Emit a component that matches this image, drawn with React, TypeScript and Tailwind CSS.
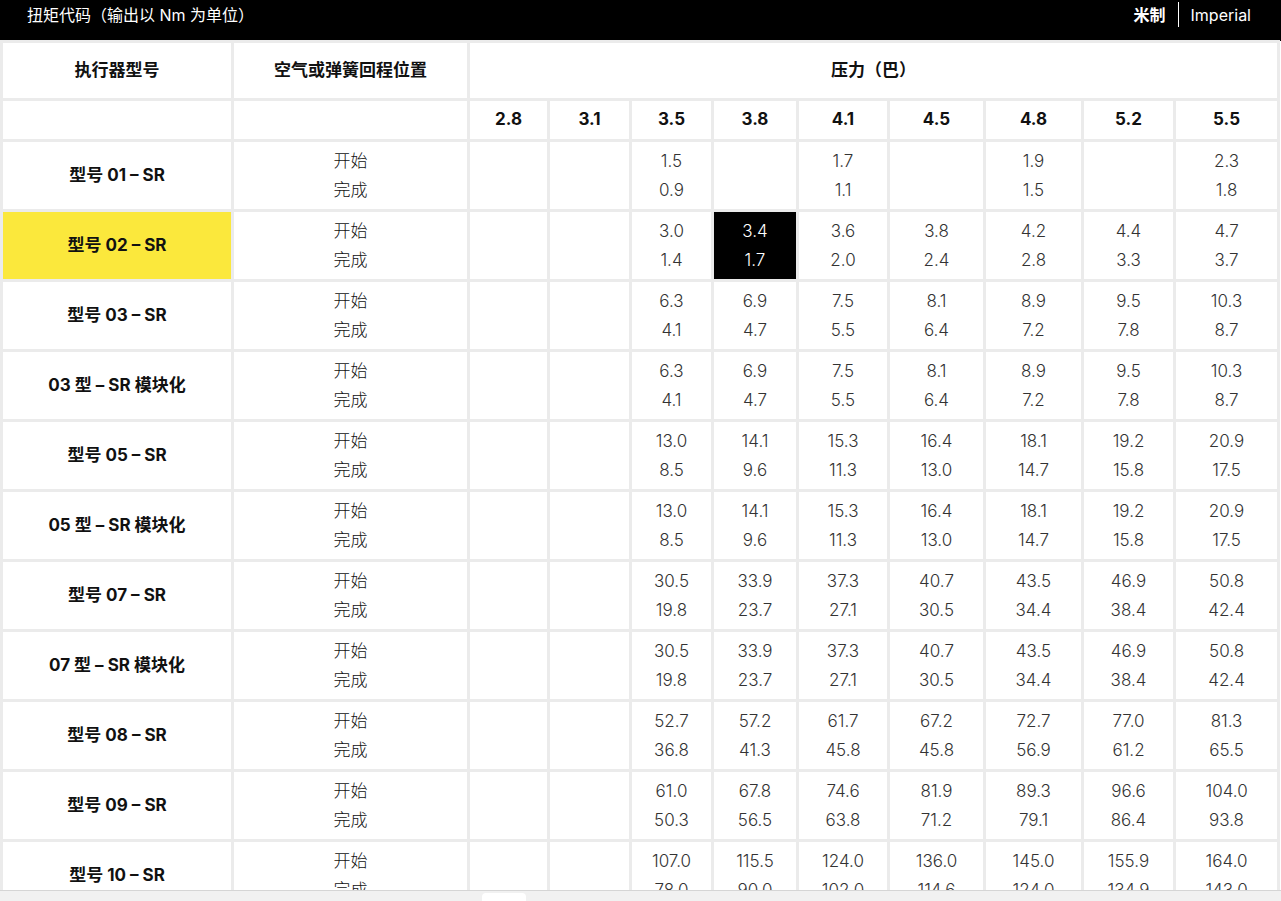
const cols = ["2.8", "3.1", "3.5", "3.8", "4.1", "4.5", "4.8", "5.2", "5.5"];
const widths = [231, 236, 80, 82, 82, 85, 91, 96, 98, 92, 104];

type Row = { name: string; vals: (string[] | null)[]; hl?: boolean };

const rows: Row[] = [
  { name: "型号 01 – SR", vals: [null, null, ["1.5", "0.9"], null, ["1.7", "1.1"], null, ["1.9", "1.5"], null, ["2.3", "1.8"]] },
  { name: "型号 02 – SR", hl: true, vals: [null, null, ["3.0", "1.4"], ["3.4", "1.7"], ["3.6", "2.0"], ["3.8", "2.4"], ["4.2", "2.8"], ["4.4", "3.3"], ["4.7", "3.7"]] },
  { name: "型号 03 – SR", vals: [null, null, ["6.3", "4.1"], ["6.9", "4.7"], ["7.5", "5.5"], ["8.1", "6.4"], ["8.9", "7.2"], ["9.5", "7.8"], ["10.3", "8.7"]] },
  { name: "03 型 – SR 模块化", vals: [null, null, ["6.3", "4.1"], ["6.9", "4.7"], ["7.5", "5.5"], ["8.1", "6.4"], ["8.9", "7.2"], ["9.5", "7.8"], ["10.3", "8.7"]] },
  { name: "型号 05 – SR", vals: [null, null, ["13.0", "8.5"], ["14.1", "9.6"], ["15.3", "11.3"], ["16.4", "13.0"], ["18.1", "14.7"], ["19.2", "15.8"], ["20.9", "17.5"]] },
  { name: "05 型 – SR 模块化", vals: [null, null, ["13.0", "8.5"], ["14.1", "9.6"], ["15.3", "11.3"], ["16.4", "13.0"], ["18.1", "14.7"], ["19.2", "15.8"], ["20.9", "17.5"]] },
  { name: "型号 07 – SR", vals: [null, null, ["30.5", "19.8"], ["33.9", "23.7"], ["37.3", "27.1"], ["40.7", "30.5"], ["43.5", "34.4"], ["46.9", "38.4"], ["50.8", "42.4"]] },
  { name: "07 型 – SR 模块化", vals: [null, null, ["30.5", "19.8"], ["33.9", "23.7"], ["37.3", "27.1"], ["40.7", "30.5"], ["43.5", "34.4"], ["46.9", "38.4"], ["50.8", "42.4"]] },
  { name: "型号 08 – SR", vals: [null, null, ["52.7", "36.8"], ["57.2", "41.3"], ["61.7", "45.8"], ["67.2", "45.8"], ["72.7", "56.9"], ["77.0", "61.2"], ["81.3", "65.5"]] },
  { name: "型号 09 – SR", vals: [null, null, ["61.0", "50.3"], ["67.8", "56.5"], ["74.6", "63.8"], ["81.9", "71.2"], ["89.3", "79.1"], ["96.6", "86.4"], ["104.0", "93.8"]] },
  { name: "型号 10 – SR", vals: [null, null, ["107.0", "78.0"], ["115.5", "90.0"], ["124.0", "102.0"], ["136.0", "114.6"], ["145.0", "124.0"], ["155.9", "134.9"], ["164.0", "143.0"]] },
];

const cell = "border-[3px] border-[#ebebeb] text-center align-middle p-0";

export default function App() {
  return (
    <div className="h-[901px] overflow-hidden bg-white text-[#111] relative" style={{ fontFamily: "Inter, 'Noto Sans CJK SC', sans-serif" }}>
      <div className="h-[41px] bg-black text-white flex items-center justify-between pl-[27px] pr-[30px] text-[16px] pb-[12px]">
        <span>扭矩代码（输出以 Nm 为单位）</span>
        <div className="flex items-center">
          <span className="font-bold pr-3">米制</span>
          <span className="w-px h-[25px] bg-white" />
          <span className="pl-3">Imperial</span>
        </div>
      </div>
      <table className="table-fixed border-collapse w-[1280px] -mt-[1px] text-[16px]">
        <colgroup>
          {widths.map((w, i) => <col key={i} style={{ width: w }} />)}
        </colgroup>
        <tbody>
          <tr className="h-[58px] font-bold text-[17px]">
            <td className={cell}>执行器型号</td>
            <td className={cell}>空气或弹簧回程位置</td>
            <td className={cell} colSpan={9}>压力（巴）</td>
          </tr>
          <tr className="h-[41px] font-bold text-[17px]">
            <td className={cell} />
            <td className={cell} />
            {cols.map((c) => <td key={c} className={cell}>{c}</td>)}
          </tr>
          {rows.map((r) => (
            <tr key={r.name} className="h-[70px]">
              <td className={`${cell} font-bold text-[17px] ${r.hl ? "bg-[#fbe83c]" : ""}`}>{r.name}</td>
              <td className={`${cell} font-light text-[17px] leading-[29px]`}>开始<br />完成</td>
              {r.vals.map((v, i) => (
                <td key={i} className={`${cell} font-light text-[17px] leading-[29px] ${r.hl && i === 3 ? "bg-black text-white" : "text-[#333]"}`}>
                  {v && <>{v[0]}<br />{v[1]}</>}
                </td>
              ))}
            </tr>
          ))}
        </tbody>
      </table>
      <div className="absolute left-0 right-0 bottom-0 h-[11px] bg-[#f1f1f1] border-t border-[#d5d5d5]">
        <div className="absolute left-[482px] top-[2px] w-[44px] h-[9px] bg-white rounded-t" />
      </div>
    </div>
  );
}
